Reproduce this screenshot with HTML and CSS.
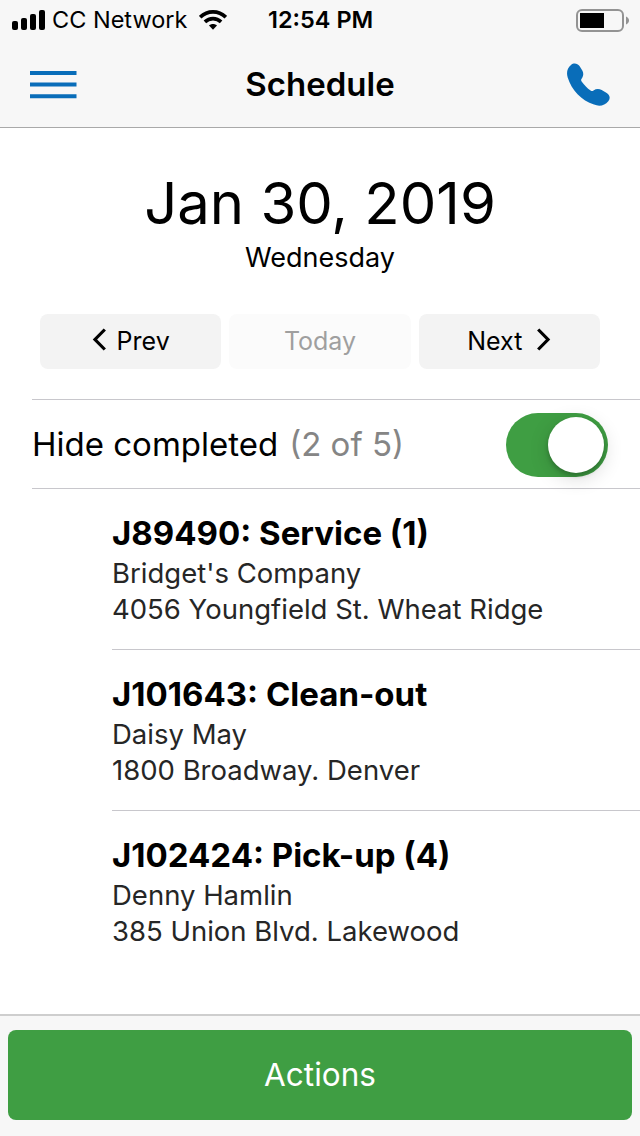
FILE: index.html
```
<!DOCTYPE html>
<html lang="en">
<head>
<meta charset="utf-8">
<title>Schedule</title>
<link rel="stylesheet" href="styles.css">
</head>
<body>
<header class="header">
  <div class="status">
    <div class="carrier">
      <svg class="signal" width="33" height="20" viewBox="0 0 33 20"><rect x="0" y="11" width="6" height="9" rx="2"/><rect x="9" y="8" width="6" height="12" rx="2"/><rect x="18" y="4" width="6" height="16" rx="2"/><rect x="27" y="0" width="6" height="20" rx="2"/></svg>
      <span class="network">CC Network</span>
      <svg class="wifi" width="28" height="20" viewBox="0 0 28 20"><g fill="none" stroke="#000" stroke-width="3.6"><path d="M1.2 7.2C8.5 0.1 19.5 0.1 26.8 7.2"/><path d="M5.9 11.9c4.6-4.4 11.6-4.4 16.2 0"/></g><path d="M10 15.6c2.3-2 5.7-2 8 0l-4 4.2z"/></svg>
    </div>
    <span class="clock">12:54 PM</span>
    <svg class="battery" width="53" height="23" viewBox="0 0 53 23"><rect x="1" y="1" width="46" height="21" rx="5" fill="none" stroke="#939393" stroke-width="2"/><rect x="4" y="4" width="24" height="15"/><path d="M50 7.5c4 1.5 4 6.500 0 8z" fill="#939393"/></svg>
  </div>
  <nav class="navbar">
    <svg class="menu" width="47" height="28" viewBox="0 0 47 28"><path d="M0 2h46.500M0 13.600h46.500M0 25.200h46.500" stroke="#096db9" stroke-width="4"/></svg>
    <h1 class="title">Schedule</h1>
    <svg class="phone" width="43" height="44" viewBox="0 0 43 44"><path fill="#096db9" d="M4 2C6.500-.3 10.500.2 12.500 3l2.800 4.500c1.800 3.200.8 6-.7 8.200-1.100 1.600-.3 2.300.4 3.300 2.300 3.200 5.200 6.200 8.600 8.500 1.100.7 1.800.7 2.900-.1 2.600-1.700 5.500-1.700 8.200-.4l5 3c3.300 2.200 3.900 5.500 1.600 8.200-3.600 4.200-8.500 5.800-14.300 3.400C14.500 37.500 4.500 27 .7 14.500-.8 9.500.2 5.200 4 2z"/></svg>
  </nav>
</header>
<main class="content">
  <h2 class="date">Jan 30, 2019</h2>
  <p class="weekday">Wednesday</p>
  <div class="pager">
    <button class="pager-button"><svg class="chevron-left" width="15" height="23" viewBox="0 0 15 23"><path d="M12.800 1.500L3 11.500l9.800 10" fill="none" stroke="#000" stroke-width="3.200"/></svg><span class="prev-label">Prev</span></button>
    <button class="pager-button today" disabled>Today</button>
    <button class="pager-button"><span class="next-label">Next</span><svg class="chevron-right" width="15" height="23" viewBox="0 0 15 23"><path d="M2.200 1.500l9.800 10-9.800 10" fill="none" stroke="#000" stroke-width="3.200"/></svg></button>
  </div>
  <div class="filter">
    <span class="filter-label">Hide completed</span><span class="filter-count">(2 of 5)</span>
    <span class="toggle"><span class="knob"></span></span>
  </div>
  <ul class="jobs">
    <li class="job"><h3 class="job-title t1">J89490: Service (1)</h3><p class="line l1">Bridget's Company</p><p class="line l2">4056 Youngfield St. Wheat Ridge</p></li>
    <li class="job"><h3 class="job-title t2">J101643: Clean-out</h3><p class="line l3">Daisy May</p><p class="line l4">1800 Broadway. Denver</p></li>
    <li class="job"><h3 class="job-title t3">J102424: Pick-up (4)</h3><p class="line l5">Denny Hamlin</p><p class="line l6">385 Union Blvd. Lakewood</p></li>
  </ul>
</main>
<footer class="footer"><button class="actions"><span>Actions</span></button></footer>
</body>
</html>
```
FILE: styles.css
```
* { box-sizing: border-box; margin: 0; padding: 0; }
body { width: 640px; height: 1136px; display: flex; flex-direction: column; overflow: hidden; background: #fff; color: #000; font-family: Inter, "Liberation Sans", sans-serif; white-space: nowrap; }
svg { display: block; flex: none; }
button { border: 0; font-family: inherit; color: #000; }
.header { height: 128px; flex: none; background: #f7f7f7; border-bottom: 1px solid #a9a9a9; }
.status { height: 40px; display: grid; grid-template-columns: 268px 1fr auto; align-items: center; padding-right: 11px; font-size: 23.5px; line-height: 40px; }
.carrier { display: flex; align-items: center; padding-left: 12px; }
.network { width: 135px; margin: 0 12px 0 7px; }
.clock { font-weight: 600; }
.navbar { height: 87px; display: grid; grid-template-columns: 60px 1fr 60px; align-items: center; padding: 0 30px; }
.title { font-size: 33px; font-weight: 600; line-height: 40px; text-align: center; }
.menu { margin-top: 3px; }
.phone { justify-self: end; margin-top: 2px; }
.content { flex: 1; }
.date { margin-top: 39px; font-size: 58px; line-height: 72px; font-weight: 400; text-align: center; }
.weekday { margin-top: 1px; font-size: 27px; line-height: 36px; text-align: center; }
.pager { display: grid; grid-template-columns: repeat(3, 1fr); gap: 8px; margin: 38px 40px 30px; }
.pager-button { height: 55px; display: flex; align-items: center; justify-content: center; border-radius: 8px; background: #f3f3f3; font-size: 25px; line-height: 54px; padding-bottom: 1px; }
.chevron-left { margin: -4px 10px 0 0; }
.chevron-right { margin: -4px 0 0 14px; }
.today { background: #fbfbfb; color: #9f9f9f; }
.filter { height: 90px; margin-left: 32px; padding-right: 32px; display: flex; align-items: center; border-top: 1px solid #c8c7cc; border-bottom: 1px solid #c8c7cc; font-size: 33px; line-height: 40px; }
.filter-count { margin-left: 11px; color: #858585; }
.toggle { width: 102px; height: 64px; margin-left: auto; margin-top: 2px; padding: 4px; display: flex; justify-content: flex-end; border-radius: 32px; background: #3f9e43; }
.knob { width: 56px; height: 56px; border-radius: 50%; background: #fff; box-shadow: 0 5px 20px rgba(0,0,0,.16), 0 3px 4px rgba(0,0,0,.2); }
.jobs { list-style: none; margin-left: 112px; }
.job { height: 161px; padding-top: 24px; border-bottom: 1px solid #c8c7cc; }
.job:last-child { border-bottom: 0; }
.job-title { font-size: 33px; line-height: 40px; font-weight: 700; }
.line { font-size: 27.5px; line-height: 36px; color: #262626; }
.job-title + .line { margin-top: 2px; }
.footer { height: 122px; flex: none; padding: 14px 8px 0; border-top: 2px solid #cecece; background: #f7f7f7; }
.actions { width: 100%; height: 89.500px; border-radius: 8px; background: #3f9e43; color: #fff; font-size: 31.5px; line-height: 89px; }
```
